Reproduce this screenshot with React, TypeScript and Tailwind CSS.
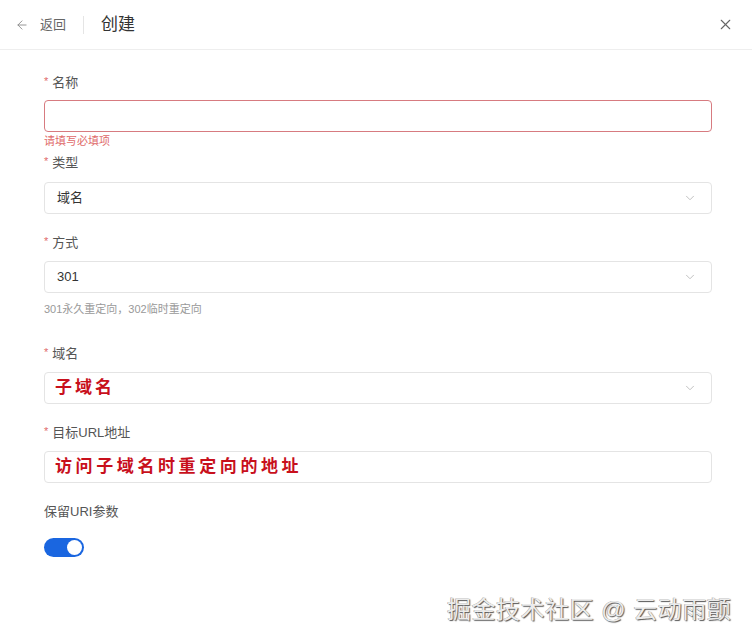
import { ArrowLeft, X, ChevronDown } from "lucide-react";

const font = { fontFamily: '"Liberation Sans", "Noto Sans CJK SC", sans-serif' };

function Label({ text, required = true }: { text: string; required?: boolean }) {
  return (
    <div className="flex items-center h-[20px] text-[13px] text-[#555]">
      {required && <span className="text-[#e06a6a] text-[11px] mr-[4px] mt-[-3px]">*</span>}
      <span>{text}</span>
    </div>
  );
}

function Select({ value, annotate = false }: { value: string; annotate?: boolean }) {
  return (
    <div className="flex items-center justify-between h-[32px] border border-[#e4e4e4] rounded-[4px] pl-[12px] pr-[14px]">
      {annotate ? (
        <span className="text-[17px] font-bold text-[#c8101c] tracking-[3px] ml-[-2px]">{value}</span>
      ) : (
        <span className="text-[13px] text-[#333]">{value}</span>
      )}
      <ChevronDown className="w-[14px] h-[14px] text-[#b8b8b8]" strokeWidth={1.5} />
    </div>
  );
}

export default function App() {
  return (
    <div className="relative w-[752px] h-[644px] bg-white overflow-hidden" style={font}>
      <header className="flex items-center justify-between h-[50px] border-b border-[#eeeeee] pl-[15px] pr-[18px]">
        <div className="flex items-center">
          <ArrowLeft className="w-[14px] h-[14px] text-[#888]" strokeWidth={1.5} />
          <span className="ml-[11px] text-[13px] text-[#666]">返回</span>
          <span className="mx-[17px] w-px h-[18px] bg-[#e5e5e5]" />
          <span className="text-[17px] text-[#333]">创建</span>
        </div>
        <X className="w-[17px] h-[17px] text-[#666]" strokeWidth={1.5} />
      </header>

      <div className="pl-[44px] pt-[23px]">
        <div className="w-[668px]">
          <Label text="名称" />
          <div className="mt-[7px] h-[32px] border border-[#d77b80] rounded-[4px]" />
          <div className="mt-[1px] text-[11px] text-[#e06a6a] leading-[16px]">请填写必填项</div>

          <div className="mt-[4px]">
            <Label text="类型" />
          </div>
          <div className="mt-[9px]">
            <Select value="域名" />
          </div>

          <div className="mt-[19px]">
            <Label text="方式" />
          </div>
          <div className="mt-[8px]">
            <Select value="301" />
          </div>
          <div className="mt-[8px] text-[11px] text-[#999] leading-[16px]">301永久重定向，302临时重定向</div>

          <div className="mt-[27px]">
            <Label text="域名" />
          </div>
          <div className="mt-[8px]">
            <Select value="子域名" annotate />
          </div>

          <div className="mt-[19px]">
            <Label text="目标URL地址" />
          </div>
          <div className="mt-[8px] flex items-center h-[32px] border border-[#e4e4e4] rounded-[4px] pl-[10px]">
            <span className="text-[17px] font-bold text-[#c8101c] tracking-[3.6px]">访问子域名时重定向的地址</span>
          </div>

          <div className="mt-[19px]">
            <Label text="保留URI参数" required={false} />
          </div>
          <div className="mt-[16px] w-[40px] h-[19px] rounded-full bg-[#1a66e0] flex items-center justify-end pr-[2px]">
            <div className="w-[15px] h-[15px] rounded-full bg-white" />
          </div>
        </div>
      </div>

      <div
        className="absolute left-[447px] top-[592px] text-[24px] text-[#ececec] tracking-[0.5px]"
        style={{ textShadow: "1px 1px 1px #555, -0.5px -0.5px 0 #999" }}
      >
        掘金技术社区 @ 云动雨颤
      </div>
    </div>
  );
}
